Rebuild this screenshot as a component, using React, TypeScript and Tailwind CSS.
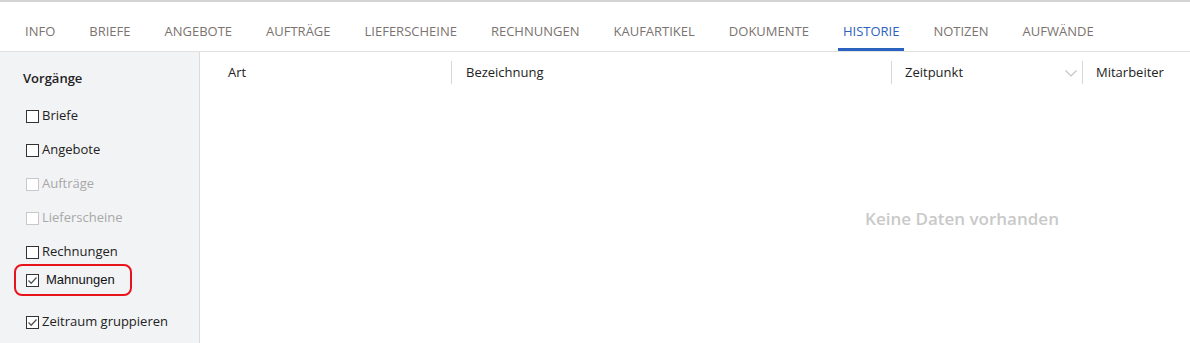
import React from 'react';

const tabs = [
  'INFO',
  'BRIEFE',
  'ANGEBOTE',
  'AUFTRÄGE',
  'LIEFERSCHEINE',
  'RECHNUNGEN',
  'KAUFARTIKEL',
  'DOKUMENTE',
  'HISTORIE',
  'NOTIZEN',
  'AUFWÄNDE',
];

const filters = [
  { label: 'Briefe', checked: false, disabled: false },
  { label: 'Angebote', checked: false, disabled: false },
  { label: 'Aufträge', checked: false, disabled: true },
  { label: 'Lieferscheine', checked: false, disabled: true },
  { label: 'Rechnungen', checked: false, disabled: false },
];

const Box = ({ checked, disabled }: { checked?: boolean; disabled?: boolean }) => (
  <span
    className={
      'w-[13px] h-[13px] border flex items-center justify-center shrink-0 bg-white ' +
      (disabled ? 'border-[#c9c9c9]' : 'border-[#333]')
    }
  >
    {checked && (
      <svg width="11" height="11" viewBox="0 0 11 11" fill="none">
        <path d="M1.5 5.5 L4.2 8.2 L9.5 2.5" stroke="#555" strokeWidth="1.3" />
      </svg>
    )}
  </span>
);

export default function App() {
  return (
    <div
      className="w-[1190px] h-[343px] bg-white overflow-hidden flex flex-col border-t-2 border-[#d4d4d4]"
      style={{ fontFamily: '"Open Sans", "Noto Sans", sans-serif' }}
    >
      {/* Tabs */}
      <div className="h-[50px] flex items-end gap-[24px] pl-[20px] border-b border-[#e2e2e2] shrink-0">
        {tabs.map((t) => {
          const active = t === 'HISTORIE';
          return (
            <div
              key={t}
              className={
                'h-[31px] px-[5px] text-[13px] flex items-start pt-[2px] border-b-[3px] ' +
                (active ? 'text-[#2b62c0] border-[#2b62c0]' : 'text-[#7a7370] border-transparent')
              }
            >
              {t}
            </div>
          );
        })}
      </div>

      <div className="flex flex-1 min-h-0">
        {/* Sidebar */}
        <div className="w-[200px] shrink-0 bg-[#f2f3f5] border-r border-[#dcdcdc] pl-[23px] pt-[17px] text-[13px]">
          <div className="font-semibold text-[#222] h-[18px] leading-[18px]">Vorgänge</div>
          <div className="flex flex-col gap-[16px] mt-[20px] pl-[3px]">
            {filters.map((f) => (
              <label
                key={f.label}
                className={
                  'flex items-center gap-[3px] h-[18px] ' +
                  (f.disabled ? 'text-[#a8a8a8]' : 'text-[#222]')
                }
              >
                <Box checked={f.checked} disabled={f.disabled} />
                <span>{f.label}</span>
              </label>
            ))}
          </div>
          <div className="-ml-[9px] mt-[3px] w-[118px] h-[32px] rounded-[8px] border-2 border-[#e8141c] flex items-center pl-[10px] gap-[7px] text-[#111]">
            <Box checked />
            <span style={{ fontFamily: '"Liberation Sans", Arial, sans-serif' }} className="text-[13px]">
              Mahnungen
            </span>
          </div>
          <label className="flex items-center gap-[3px] h-[18px] mt-[17px] pl-[3px] text-[#222]">
            <Box checked />
            <span>Zeitraum gruppieren</span>
          </label>
        </div>

        {/* Table */}
        <div className="flex-1 overflow-hidden">
          <div className="w-[1524px]">
            <div className="flex items-center h-[41px] text-[13px] text-[#222] font-medium">
              <div className="w-[251px] pl-[28px]">Art</div>
              <div className="w-[440px] h-[23px] border-l border-[#d6d6d6] pl-[14px] flex items-center">Bezeichnung</div>
              <div className="w-[191px] h-[23px] border-l border-[#d6d6d6] pl-[13px] pr-[4px] flex items-center justify-between">
                <span>Zeitpunkt</span>
                <svg width="14" height="10" viewBox="0 0 14 10" fill="none">
                  <path d="M1.5 2.5 L7 8 L12.5 2.5" stroke="#c4c4c4" strokeWidth="1.2" />
                </svg>
              </div>
              <div className="flex-1 h-[23px] border-l border-[#d6d6d6] pl-[13px] flex items-center">Mitarbeiter</div>
            </div>
            <div className="flex justify-center pt-[113px] text-[17px] font-semibold text-[#c9c9c9]">
              Keine Daten vorhanden
            </div>
          </div>
        </div>
      </div>
    </div>
  );
}
